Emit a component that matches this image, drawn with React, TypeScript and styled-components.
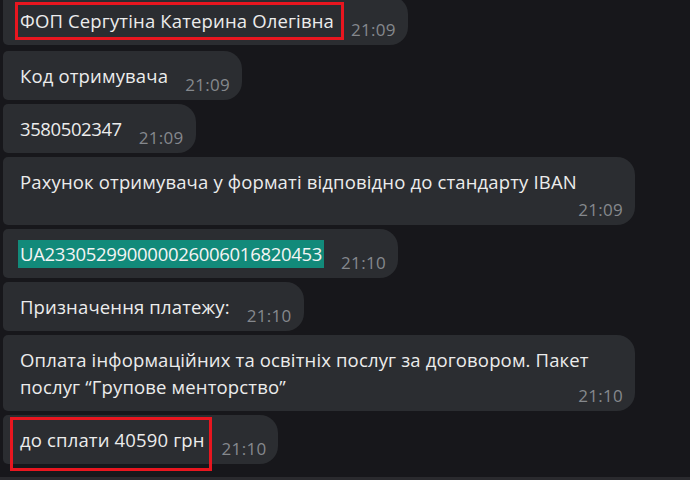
import React from "react";
import styled, { createGlobalStyle } from "styled-components";

const Global = createGlobalStyle`
  html, body { margin: 0; padding: 0; background: #17171b; }
  body { font-family: "Open Sans", "Noto Sans", sans-serif; -webkit-font-smoothing: antialiased; }
  #root { height: 480px; overflow: hidden; }
`;

const Page = styled.div`
  height: 480px;
  display: flex;
  flex-direction: column;
  background: #17171b;
  overflow: hidden;
`;

const List = styled.div`
  display: flex;
  flex-direction: column;
  align-items: flex-start;
  gap: 4px;
  padding-left: 3px;
  margin-top: -4px;
`;

const Bubble = styled.div<{ $extra?: number }>`
  position: relative;
  display: flow-root;
  box-sizing: border-box;
  max-width: 632px;
  padding: 11px 12px 11px 17px;
  margin-bottom: ${(p) => p.$extra ?? 0}px;
  background: #2b2d31;
  border-radius: 5px 18px 18px 5px;
  color: #ececec;
  font-size: 18.5px;
  line-height: 27px;
  letter-spacing: 0.15px;
`;

const Time = styled.span<{ $below?: boolean }>`
  float: right;
  margin-left: 17px;
  margin-top: ${(p) => (p.$below ? 5 : 13)}px;
  margin-bottom: -6px;
  font-size: 17px;
  line-height: 20px;
  letter-spacing: 0.3px;
  color: #85888d;
`;

const Selected = styled.span`
  background: #128a7a;
  color: #f4f4f4;
  letter-spacing: -0.3px;
  padding: 1px 2px 2px;
  margin-left: -2px;
`;

const Number = styled.span`
  letter-spacing: -0.4px;
`;

const Mark = styled.div<{ $l: number; $t: number; $w: number; $h: number }>`
  position: absolute;
  left: ${(p) => p.$l}px;
  top: ${(p) => p.$t}px;
  width: ${(p) => p.$w}px;
  height: ${(p) => p.$h}px;
  box-sizing: border-box;
  border: 3px solid #e8161f;
  pointer-events: none;
`;

const Footer = styled.div`
  margin-top: auto;
  height: 3px;
  background: #2a2a2e;
`;

type Msg = {
  text: React.ReactNode;
  time: string;
  below?: boolean;
  extra?: number;
  mark?: { l: number; t: number; w: number; h: number };
};

const messages: Msg[] = [
  {
    text: "ФОП Сергутіна Катерина Олегівна",
    time: "21:09",
    extra: 2,
    mark: { l: 12, t: 6, w: 329, h: 38 },
  },
  { text: "Код отримувача", time: "21:09" },
  { text: <Number>3580502347</Number>, time: "21:09" },
  {
    text: "Рахунок отримувача у форматі відповідно до стандарту IBAN",
    time: "21:09",
    below: true,
  },
  { text: <Selected>UA233052990000026006016820453</Selected>, time: "21:10" },
  { text: "Призначення платежу:", time: "21:10" },
  {
    text: "Оплата інформаційних та освітніх послуг за договором. Пакет послуг “Групове менторство”",
    time: "21:10",
  },
  {
    text: "до сплати 40590 грн",
    time: "21:10",
    mark: { l: 7, t: 2, w: 202, h: 54 },
  },
];

export default function App() {
  return (
    <Page>
      <Global />
      <List>
        {messages.map((m, i) => (
          <Bubble key={i} $extra={m.extra}>
            {m.text}
            <Time $below={m.below}>{m.time}</Time>
            {m.mark && <Mark $l={m.mark.l} $t={m.mark.t} $w={m.mark.w} $h={m.mark.h} />}
          </Bubble>
        ))}
      </List>
      <Footer />
    </Page>
  );
}
